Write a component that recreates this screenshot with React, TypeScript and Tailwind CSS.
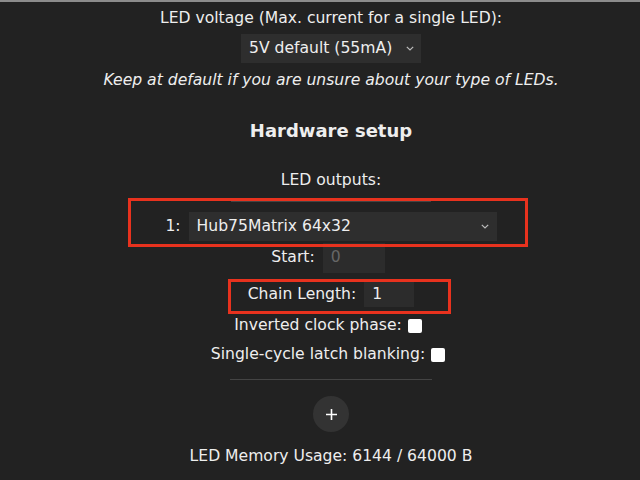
function Chevron() {
  return (
    <svg width="8" height="5" viewBox="0 0 8 5" className="text-[#bbb]">
      <path d="M0.8 0.8l3.2 3.2 3.2-3.2" fill="none" stroke="currentColor" strokeWidth="1.2" />
    </svg>
  );
}

function Field({ label, value, width, muted }: { label: string; value: string; width: string; muted?: boolean }) {
  return (
    <div className="flex items-center gap-2 h-full">
      <span>{label}</span>
      <div className={`${width} h-full bg-[#2c2c2c] px-2 flex items-center ${muted ? "text-[#666]" : "text-[#eee]"}`}>
        {value}
      </div>
    </div>
  );
}

export default function App() {
  return (
    <div className="relative min-h-screen bg-[#222] text-[#eee] font-['DejaVu_Sans',sans-serif] text-[15.6px] border-t-2 border-[#8c8c8c] overflow-hidden">
      <div className="pl-[22px] flex flex-col items-center">
        <p className="mt-[4px] leading-6">LED voltage (Max. current for a single LED):</p>
        <div className="mt-[4px] h-[29px] w-[180px] bg-[#2e2e2e] flex items-center justify-between pl-[8px] pr-[7px]">
          <span>5V default (55mA)</span>
          <Chevron />
        </div>
        <p className="mt-[5px] leading-6 italic">Keep at default if you are unsure about your type of LEDs.</p>

        <h2 className="mt-[25px] leading-7 font-bold text-[18px]">Hardware setup</h2>
        <p className="mt-[23px] leading-6">LED outputs:</p>

        <div className="mt-[9px] w-[200px] h-px bg-[#444]" />
        <div className="mt-[10px] flex items-center gap-2 h-[29px]">
          <span>1:</span>
          <div className="w-[308px] h-full bg-[#2e2e2e] flex items-center justify-between pl-[8px] pr-[8px]">
            <span>Hub75Matrix 64x32</span>
            <Chevron />
          </div>
        </div>

        <div className="mt-[2px] h-[30px] -translate-x-[3px]">
          <Field label="Start:" value="0" width="w-[62px]" muted />
        </div>
        <div className="mt-[9px] h-[25px]">
          <Field label="Chain Length:" value="1" width="w-[50px]" />
        </div>

        <label className="mt-[4px] h-[30px] flex items-center gap-[6px] -translate-x-[3px]">
          <span>Inverted clock phase:</span>
          <span className="w-[14px] h-[14px] bg-white rounded-[2px]" />
        </label>
        <label className="h-[28px] flex items-center gap-[6px] -translate-x-[3px]">
          <span>Single-cycle latch blanking:</span>
          <span className="w-[14px] h-[14px] bg-white rounded-[2px]" />
        </label>

        <div className="mt-[10px] w-[202px] h-px bg-[#444]" />

        <button className="mt-[16px] w-[36px] h-[36px] rounded-full bg-[#333] flex items-center justify-center text-white">
          <svg width="11" height="11" viewBox="0 0 11 11">
            <path d="M5.5 0v11M0 5.5h11" stroke="currentColor" strokeWidth="1.6" />
          </svg>
        </button>

        <p className="mt-[12px] leading-6">LED Memory Usage: 6144 / 64000 B</p>
      </div>

      <div className="absolute left-[128px] top-[196px] w-[400px] h-[49px] border-[3px] border-[#e8321e]" />
      <div className="absolute left-[228px] top-[277px] w-[223px] h-[35px] border-[3px] border-[#e8321e]" />
    </div>
  );
}
